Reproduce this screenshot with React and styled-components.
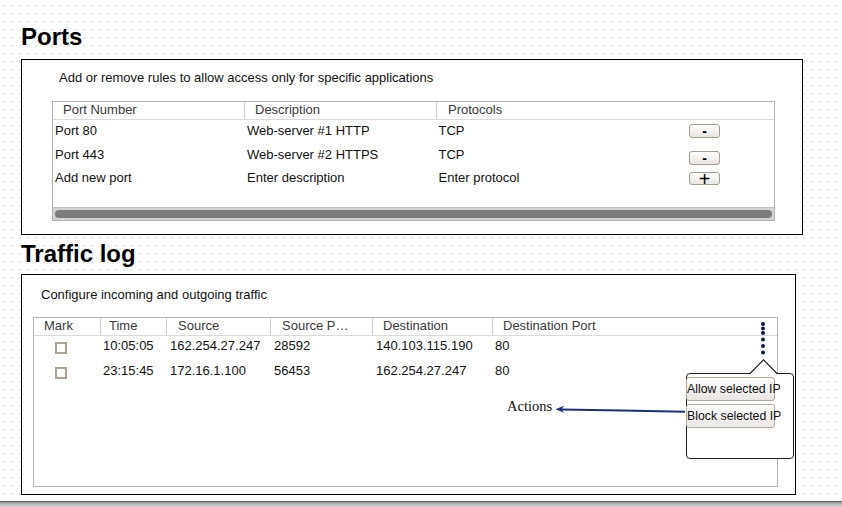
import React from 'react';
import styled, { createGlobalStyle } from 'styled-components';

const GlobalStyle = createGlobalStyle`
  html, body {
    margin: 0;
    padding: 0;
  }
  body {
    font-family: 'Liberation Sans', Arial, sans-serif;
    background-color: #fff;
    background-image: radial-gradient(circle, #dedede 0.6px, transparent 0.9px);
    background-size: 8px 8px;
    background-position: 0 2px;
  }
`;

const Page = styled.div`
  min-height: 100vh;
  box-sizing: border-box;
  padding-top: 22px;
  display: flex;
  flex-direction: column;
`;

const Heading = styled.h1`
  margin: ${p => p.$top}px 0 ${p => p.$bottom}px 21px;
  font-size: 24px;
  line-height: 30px;
  font-weight: bold;
  color: #000;
`;

const Panel = styled.section`
  position: relative;
  box-sizing: border-box;
  width: ${p => p.$width}px;
  height: ${p => p.$height}px;
  margin-left: 21px;
  padding: ${p => p.$pad};
  border: 1px solid #000;
  background: #fff;
`;

const Intro = styled.p`
  margin: 0 0 ${p => p.$gap}px ${p => p.$indent}px;
  font-size: 13px;
  line-height: 16px;
  color: #111;
`;

const Table = styled.div`
  position: relative;
  box-sizing: border-box;
  width: ${p => p.$width}px;
  height: ${p => p.$height}px;
  border: 1px solid #b3b3b3;
  background: #fff;
  display: flex;
  flex-direction: column;
  font-size: 13px;
`;

const HeadRow = styled.div`
  display: grid;
  grid-template-columns: ${p => p.$cols};
  height: 18px;
  box-sizing: border-box;
  border-bottom: 1px solid #dadada;
  color: #3a3a3a;
`;

const HeadCell = styled.div`
  padding-left: ${p => p.$pad}px;
  line-height: 15px;
  white-space: nowrap;
  overflow: hidden;
  border-right: ${p => (p.$last ? 'none' : '1px solid #d2d2d2')};
`;

const Row = styled.div`
  display: grid;
  grid-template-columns: ${p => p.$cols};
  height: ${p => p.$h}px;
  box-sizing: border-box;
  padding-top: ${p => p.$pt}px;
  line-height: 15px;
  color: #111;
`;

const Cell = styled.div`
  padding-left: ${p => p.$pad}px;
  white-space: nowrap;
`;

const RowButton = styled.button`
  display: flex;
  align-items: center;
  justify-content: center;
  box-sizing: border-box;
  width: 31px;
  height: ${p => p.$h}px;
  margin-top: ${p => p.$top}px;
  padding: 0;
  border: 1px solid #a89e90;
  border-radius: 3px;
  background: linear-gradient(#ffffff, #e8e6e2);
  font-family: 'Liberation Sans', Arial, sans-serif;
  font-weight: ${p => p.$weight};
  font-size: ${p => p.$size}px;
  line-height: 1;
  color: #000;
`;

const Body = styled.div`
  flex: 1;
`;

const ScrollTrack = styled.div`
  height: 13px;
  box-sizing: border-box;
  padding: 2px 2px 0;
  background: #d2d2d2;
  border-top: 1px solid #c4c4c4;
`;

const ScrollThumb = styled.div`
  height: 8px;
  border-radius: 4px;
  background: #7b7b7b;
`;

const Check = styled.span`
  display: block;
  box-sizing: border-box;
  width: 12px;
  height: 12px;
  margin: 4px 0 0 21px;
  border: 2px solid #aaa295;
  background: #fff;
`;

const Kebab = styled.svg`
  position: absolute;
  left: 726px;
  top: 3px;
`;

const Popover = styled.div`
  position: absolute;
  left: 664px;
  top: 98px;
  box-sizing: border-box;
  width: 108px;
  height: 86px;
  border: 1px solid #1e1e1e;
  border-radius: 4px;
  background: #fff;
`;

const Notch = styled.svg`
  position: absolute;
  left: 62px;
  top: -15px;
`;

const PopButton = styled.button`
  display: block;
  box-sizing: border-box;
  width: 89px;
  height: 24px;
  margin: 3px 0 0 -1px;
  padding: 0;
  text-align: left;
  white-space: nowrap;
  font-family: 'Liberation Sans', Arial, sans-serif;
  font-size: 12.3px;
  line-height: 22px;
  color: #111;
  border: 1px solid #b3a999;
  border-radius: 3px;
  background: linear-gradient(#fdfdfd, #e9e7e4);
`;

const Annotation = styled.div`
  position: absolute;
  left: 485px;
  top: 123px;
  display: flex;
  align-items: flex-start;
`;

const Label = styled.span`
  font-family: 'Liberation Serif', 'Times New Roman', serif;
  font-size: 14.5px;
  line-height: 17px;
  color: #111;
`;

const Footer = styled.div`
  margin-top: auto;
  height: 6px;
  box-sizing: border-box;
  border-top: 1px solid #5e5e5e;
  background: linear-gradient(#9c9c9c, #c2c2c2 60%, #d0d0d0);
`;

const portCols = '192px 192px 252px 31px 1fr';
const trafficCols = '67px 66px 104px 102px 120px 1fr';

const ports = [
  { port: 'Port 80', desc: 'Web-server #1 HTTP', proto: 'TCP', sign: '-', top: 1, h: 14, size: 14, weight: 700 },
  { port: 'Port 443', desc: 'Web-server #2 HTTPS', proto: 'TCP', sign: '-', top: 4, h: 14, size: 14, weight: 700 },
  { port: 'Add new port', desc: 'Enter description', proto: 'Enter protocol', sign: '+', top: 2, h: 13, size: 20, weight: 400 },
];

const traffic = [
  { time: '10:05:05', src: '162.254.27.247', sport: '28592', dst: '140.103.115.190', dport: '80' },
  { time: '23:15:45', src: '172.16.1.100', sport: '56453', dst: '162.254.27.247', dport: '80' },
];

const dots = [3, 7.5, 12, 18.5, 25, 31.5];

export default function App() {
  return (
    <Page>
      <GlobalStyle />

      <Heading $top={0} $bottom={7}>Ports</Heading>
      <Panel $width={782} $height={176} $pad="9.5px 27px 0 30px">
        <Intro $indent={7} $gap={15.5}>
          Add or remove rules to allow access only for specific applications
        </Intro>
        <Table $width={723} $height={120}>
          <HeadRow $cols={portCols}>
            <HeadCell $pad={10}>Port Number</HeadCell>
            <HeadCell $pad={10}>Description</HeadCell>
            <HeadCell $pad={11} $last>Protocols</HeadCell>
          </HeadRow>
          <Body>
            {ports.map(r => (
              <Row key={r.port} $cols={portCols} $h={23.5} $pt={3}>
                <Cell $pad={2}>{r.port}</Cell>
                <Cell $pad={2}>{r.desc}</Cell>
                <Cell $pad={1.5}>{r.proto}</Cell>
                <Cell $pad={0}>
                  <RowButton $top={r.top} $h={r.h} $size={r.size} $weight={r.weight}>
                    {r.sign}
                  </RowButton>
                </Cell>
              </Row>
            ))}
          </Body>
          <ScrollTrack>
            <ScrollThumb />
          </ScrollTrack>
        </Table>
      </Panel>

      <Heading $top={4} $bottom={5}>Traffic log</Heading>
      <Panel $width={775} $height={221} $pad="11.5px 0 0 11px">
        <Intro $indent={8} $gap={14.5}>Configure incoming and outgoing traffic</Intro>
        <Table $width={745} $height={170}>
          <HeadRow $cols={trafficCols}>
            <HeadCell $pad={10}>Mark</HeadCell>
            <HeadCell $pad={8}>Time</HeadCell>
            <HeadCell $pad={11}>Source</HeadCell>
            <HeadCell $pad={11}>Source P…</HeadCell>
            <HeadCell $pad={10}>Destination</HeadCell>
            <HeadCell $pad={10} $last>Destination Port</HeadCell>
          </HeadRow>
          <Body>
            {traffic.map(r => (
              <Row key={r.time} $cols={trafficCols} $h={25} $pt={2}>
                <Cell $pad={0}><Check /></Cell>
                <Cell $pad={2}>{r.time}</Cell>
                <Cell $pad={3}>{r.src}</Cell>
                <Cell $pad={3}>{r.sport}</Cell>
                <Cell $pad={3}>{r.dst}</Cell>
                <Cell $pad={2}>{r.dport}</Cell>
              </Row>
            ))}
          </Body>
          <Kebab width="6" height="34" viewBox="0 0 6 34">
            {dots.map(y => (
              <circle key={y} cx="3" cy={y} r="2" fill="#0d1846" />
            ))}
          </Kebab>
        </Table>

        <Annotation>
          <Label>Actions</Label>
          <svg width="134" height="17" viewBox="0 0 134 17">
            <path d="M133 13.7 Q 70 12.2 9 11.4" fill="none" stroke="#1d2f7a" strokeWidth="2" />
            <polygon points="3.5,11.3 12,7.8 9.5,11.4 12,14.8" fill="#1d2f7a" />
          </svg>
        </Annotation>

        <Popover>
          <Notch width="29" height="16" viewBox="0 0 29 16">
            <polygon points="0,16 14.5,0.8 29,16" fill="#fff" />
            <polyline points="0.5,15 14.5,0.8 28.5,15" fill="none" stroke="#1e1e1e" strokeWidth="1.1" />
          </Notch>
          <PopButton>Allow selected IP</PopButton>
          <PopButton>Block selected IP</PopButton>
        </Popover>
      </Panel>

      <Footer />
    </Page>
  );
}
